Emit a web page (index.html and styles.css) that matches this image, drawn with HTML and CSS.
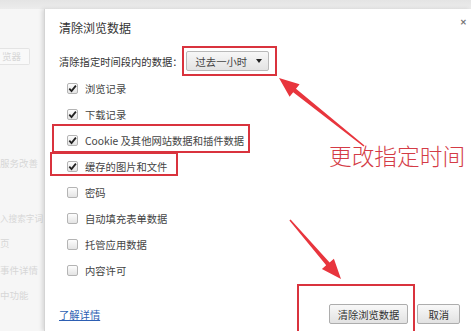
FILE: index.html
```html
<!DOCTYPE html>
<html lang="zh-CN">
<head>
    <meta charset="UTF-8">
    <meta name="viewport" content="width=device-width, initial-scale=1.0">
    <title>清除浏览数据</title>
    <link rel="stylesheet" href="styles.css">
</head>
<body>
    <div class="screen">
        <div class="topbar"></div>
        <div class="page">
            <aside class="behind">
                <div class="ghost-btn">览器</div>
                <p class="ghost g1">服务改善</p>
                <p class="ghost g2">入搜索字词</p>
                <p class="ghost g3">页</p>
                <p class="ghost g4">事件详情</p>
                <p class="ghost g5">中功能</p>
            </aside>

            <section class="dialog">
                <header class="dialog-head">
                    <h1>清除浏览数据</h1>
                    <span class="close">&#x2715;</span>
                </header>

                <div class="range-row">
                    <label>清除指定时间段内的数据：</label>
                    <div class="select">过去一小时<span class="caret"></span></div>
                </div>

                <ul class="items">
                    <li><span class="box checked"><svg viewBox="0 0 11 11"><path d="M2.3 5.6 L4.5 8 L8.9 2.6"/></svg></span>浏览记录</li>
                    <li><span class="box checked"><svg viewBox="0 0 11 11"><path d="M2.3 5.6 L4.5 8 L8.9 2.6"/></svg></span>下载记录</li>
                    <li><span class="box checked"><svg viewBox="0 0 11 11"><path d="M2.3 5.6 L4.5 8 L8.9 2.6"/></svg></span>Cookie 及其他网站数据和插件数据</li>
                    <li><span class="box checked"><svg viewBox="0 0 11 11"><path d="M2.3 5.6 L4.5 8 L8.9 2.6"/></svg></span>缓存的图片和文件</li>
                    <li><span class="box"></span>密码</li>
                    <li><span class="box"></span>自动填充表单数据</li>
                    <li><span class="box"></span>托管应用数据</li>
                    <li><span class="box"></span>内容许可</li>
                </ul>

                <div class="foot">
                    <a href="#">了解详情</a>
                    <div class="actions">
                        <button type="button">清除浏览数据</button>
                        <button type="button" class="btn-cancel">取消</button>
                    </div>
                </div>
            </section>
        </div>

        <!-- 标注 -->
        <div class="mark mark-select"></div>
        <div class="mark mark-cookie"></div>
        <div class="mark mark-cache"></div>
        <div class="mark mark-button"></div>
        <svg class="arrows" viewBox="0 0 471 331">
            <polygon points="279,78 299.6,84.3 296,88.8 364.5,145.4 363.5,146.6 293.2,92.2 289.6,96.7"/>
            <polygon points="341,279 321.9,269.1 326.2,265.3 289.4,220.5 290.6,219.5 329.6,262.5 333.9,258.7"/>
        </svg>
        <div class="note">更改指定时间</div>
    </div>
</body>
</html>
```

FILE: styles.css
```css
body {
    margin: 0;
    font-family: "Noto Sans CJK SC", "Noto Sans", sans-serif;
    color: #333;
    background: #f6f6f6;
}

.screen {
    position: relative;
    width: 471px;
    height: 331px;
    overflow: hidden;
}

.topbar {
    height: 9px;
    background: linear-gradient(#e4e4e4, #ececec);
}

.page {
    display: flex;
    height: 322px;
}

/* 对话框后面的设置页 */
.behind {
    width: 44px;
    flex-shrink: 0;
    overflow: hidden;
    color: #d6d6d6;
    font-size: 9.5px;
    white-space: nowrap;
}

.ghost-btn {
    margin-top: 39px;
    width: 30px;
    height: 17px;
    line-height: 15px;
    border: 1px solid #e4e4e4;
    border-left: none;
    border-radius: 0 2px 2px 0;
    background: #f9f9f9;
    padding-left: 2px;
    box-sizing: border-box;
}

.ghost {
    margin: 0;
    line-height: 14px;
}

.g1 { margin-top: 91px; }
.g2 { margin-top: 41px; font-size: 8.6px; }
.g3 { margin-top: 11px; }
.g4 { margin-top: 13px; }
.g5 { margin-top: 11px; }

.dialog {
    flex: 1;
    background: #fff;
    border-left: 1px solid #d4d4d4;
    box-shadow: -2px 0 4px rgba(0, 0, 0, 0.12);
    padding-left: 14px;
    font-size: 10.3px;
}

.dialog-head {
    display: flex;
    justify-content: space-between;
    align-items: flex-start;
    padding: 8px 4px 0 0;
}

.dialog-head h1 {
    margin: 4px 0 0;
    font-size: 12px;
    font-weight: normal;
    line-height: 14px;
    color: #333;
}

.close {
    font-size: 8px;
    line-height: 10px;
    color: #777;
    font-weight: bold;
}

.range-row {
    display: flex;
    align-items: center;
    gap: 3px;
    margin-top: 16px;
    height: 20px;
}

.select {
    display: flex;
    align-items: center;
    justify-content: space-between;
    width: 83px;
    height: 20px;
    box-sizing: border-box;
    padding: 0 6px 0 9px;
    border: 1px solid #b9b9b9;
    border-radius: 2px;
    background: linear-gradient(#f7f7f7, #e3e3e3);
    color: #444;
}

.caret {
    width: 0;
    height: 0;
    border-left: 3.5px solid transparent;
    border-right: 3.5px solid transparent;
    border-top: 4px solid #222;
}

.items {
    list-style: none;
    margin: 4px 0 0;
    padding: 0 0 0 8px;
}

.items li {
    display: flex;
    align-items: center;
    height: 26px;
    color: #444;
}

.box {
    width: 11px;
    height: 11px;
    box-sizing: border-box;
    margin-right: 7px;
    border: 1px solid #b4b4b4;
    border-radius: 2px;
    background: linear-gradient(#fdfdfd, #e4e4e4);
    display: flex;
}

.box svg {
    width: 11px;
    height: 11px;
    margin: -1px;
}

.box svg path {
    fill: none;
    stroke: #222;
    stroke-width: 1.8;
}

.foot {
    display: flex;
    justify-content: space-between;
    align-items: center;
    margin-top: 21px;
    padding-right: 11px;
    height: 20px;
}

.foot a {
    color: #2d5fb3;
    text-decoration: underline;
}

.actions {
    display: flex;
    gap: 9px;
}

button {
    height: 20px;
    padding: 0 8px;
    font-family: inherit;
    font-size: 10.3px;
    color: #333;
    border: 1px solid #adadad;
    border-radius: 2px;
    background: linear-gradient(#f8f8f8, #e2e2e2);
}

.btn-cancel {
    padding: 0 10px;
}

/* 红色标注 */
.mark {
    position: absolute;
    box-sizing: border-box;
    border: 2px solid #d9333d;
}

.mark-select { left: 182px; top: 46px; width: 95px; height: 30px; }
.mark-cookie { left: 52px; top: 124px; width: 198px; height: 29px; }
.mark-cache { left: 50px; top: 152px; width: 128px; height: 24px; }
.mark-button { left: 297px; top: 284px; width: 118px; height: 60px; }

.arrows {
    position: absolute;
    left: 0;
    top: 0;
    width: 471px;
    height: 331px;
}

.arrows polygon {
    fill: #e8353d;
}

.note {
    position: absolute;
    left: 329px;
    top: 145px;
    font-size: 22.7px;
    line-height: 1;
    font-weight: 300;
    color: #d43b46;
    white-space: nowrap;
}
```
